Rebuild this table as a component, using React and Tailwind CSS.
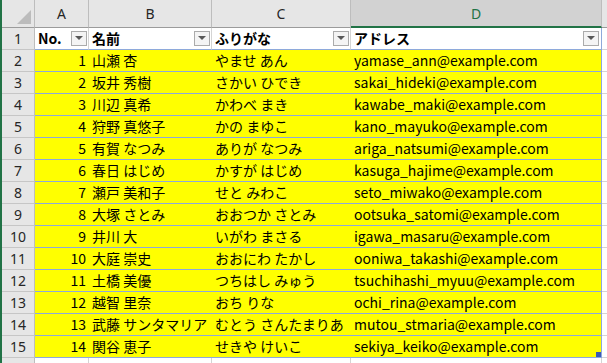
import React from 'react';

const rows = [
  [1, '山瀬 杏', 'やませ あん', 'yamase_ann@example.com'],
  [2, '坂井 秀樹', 'さかい ひでき', 'sakai_hideki@example.com'],
  [3, '川辺 真希', 'かわべ まき', 'kawabe_maki@example.com'],
  [4, '狩野 真悠子', 'かの まゆこ', 'kano_mayuko@example.com'],
  [5, '有賀 なつみ', 'ありが なつみ', 'ariga_natsumi@example.com'],
  [6, '春日 はじめ', 'かすが はじめ', 'kasuga_hajime@example.com'],
  [7, '瀬戸 美和子', 'せと みわこ', 'seto_miwako@example.com'],
  [8, '大塚 さとみ', 'おおつか さとみ', 'ootsuka_satomi@example.com'],
  [9, '井川 大', 'いがわ まさる', 'igawa_masaru@example.com'],
  [10, '大庭 崇史', 'おおにわ たかし', 'ooniwa_takashi@example.com'],
  [11, '土橋 美優', 'つちはし みゅう', 'tsuchihashi_myuu@example.com'],
  [12, '越智 里奈', 'おち りな', 'ochi_rina@example.com'],
  [13, '武藤 サンタマリア', 'むとう さんたまりあ', 'mutou_stmaria@example.com'],
  [14, '関谷 恵子', 'せきや けいこ', 'sekiya_keiko@example.com'],
];

const cols = 'grid grid-cols-[35px_54px_123px_139px_251px_5px]';
const cellFont = { fontFamily: '"Noto Sans CJK JP", "Noto Sans", sans-serif' };
const uiFont = { fontFamily: '"Noto Sans", sans-serif' };

function FilterButton() {
  return (
    <div className="w-[16px] h-[15px] border border-[#ababab] bg-[#f4f4f4] flex items-center justify-center shrink-0">
      <svg width="8" height="5" viewBox="0 0 8 5">
        <path d="M0 0 L8 0 L4 4 Z" fill="#595959" />
      </svg>
    </div>
  );
}

function HeaderCell({ label, pad, last }) {
  return (
    <div
      className={`h-[22px] bg-white border-r ${last ? 'border-[#8ea9db]' : 'border-[#d4d4d4]'} border-b border-b-[#8ea9db] flex items-center justify-between pl-[3px] ${pad}`}
      style={cellFont}
    >
      <span className="text-[14px] font-bold text-black leading-[21px] whitespace-nowrap">{label}</span>
      <FilterButton />
    </div>
  );
}

function RowHead({ children }) {
  return (
    <div className="h-[22px] bg-[#e6e6e6] border-r border-[#bdbdbd] border-b border-b-[#c6c6c6] flex items-center justify-center text-[14px] text-[#262626] pl-[2px]" style={uiFont}>
      {children}
    </div>
  );
}

export default function App() {
  return (
    <div className="w-[607px] h-[363px] overflow-hidden bg-white border-l-2 border-[#217346]">
      {/* column letters */}
      <div className={`${cols} h-[28px] -ml-[2px]`} style={uiFont}>
        <div className="bg-[#e6e6e6] border-r border-[#bdbdbd] border-b border-b-[#9b9b9b] relative">
          <svg className="absolute right-[3px] bottom-[3px]" width="14" height="14" viewBox="0 0 14 14">
            <path d="M14 0 L14 14 L0 14 Z" fill="#bcbcbc" />
          </svg>
        </div>
        {['A', 'B', 'C'].map((c) => (
          <div key={c} className="bg-[#e6e6e6] border-r border-[#bdbdbd] border-b border-b-[#9b9b9b] flex items-center justify-center text-[14px] text-[#262626]">
            {c}
          </div>
        ))}
        <div className="bg-[#d2d2d2] border-r border-[#bdbdbd] border-b-2 border-b-[#217346] flex items-center justify-center text-[14px] text-[#217346]">
          D
        </div>
        <div className="bg-[#e6e6e6] border-b border-b-[#9b9b9b]" />
      </div>

      {/* row 1: table header */}
      <div className={`${cols} -ml-[2px]`}>
        <RowHead>1</RowHead>
        <HeaderCell label="No." pad="pr-[1px]" />
        <HeaderCell label="名前" pad="pr-[1px]" />
        <HeaderCell label="ふりがな" pad="pr-[1px]" />
        <HeaderCell label="アドレス" pad="pr-[2px]" last />
        <div className="h-[22px] border-b border-[#d4d4d4]" />
      </div>

      {rows.map(([n, name, kana, mail], i) => (
        <div key={n} className={`${cols} -ml-[2px]`}>
          <RowHead>{i + 2}</RowHead>
          <div className="h-[22px] bg-[#ffff00] border-b border-[#8ea9db] flex items-center justify-end pr-[3px] text-[14px] text-black" style={cellFont}>{n}</div>
          <div className="h-[22px] bg-[#ffff00] border-b border-[#8ea9db] flex items-center pl-[3px] text-[14px] text-black whitespace-nowrap" style={cellFont}>{name}</div>
          <div className="h-[22px] bg-[#ffff00] border-b border-[#8ea9db] flex items-center pl-[3px] text-[14px] text-black whitespace-nowrap" style={cellFont}>{kana}</div>
          <div className="h-[22px] bg-[#ffff00] border-b border-r border-[#8ea9db] flex items-center pl-[3px] text-[14px] text-black whitespace-nowrap relative" style={cellFont}>
            {mail}
            {i === rows.length - 1 && <div className="absolute right-0 bottom-0 w-[5px] h-[5px] bg-[#3b5bb5]" />}
          </div>
          <div className="h-[22px] border-b border-[#d4d4d4]" />
        </div>
      ))}

      {/* row 16 peek */}
      <div className={`${cols} -ml-[2px]`}>
        <div className="h-[22px] bg-[#e6e6e6] border-r border-[#bdbdbd]" />
        <div className="h-[22px] border-r border-[#d4d4d4]" />
        <div className="h-[22px] border-r border-[#d4d4d4]" />
        <div className="h-[22px] border-r border-[#d4d4d4]" />
        <div className="h-[22px] border-r border-[#d4d4d4]" />
        <div className="h-[22px]" />
      </div>
    </div>
  );
}
